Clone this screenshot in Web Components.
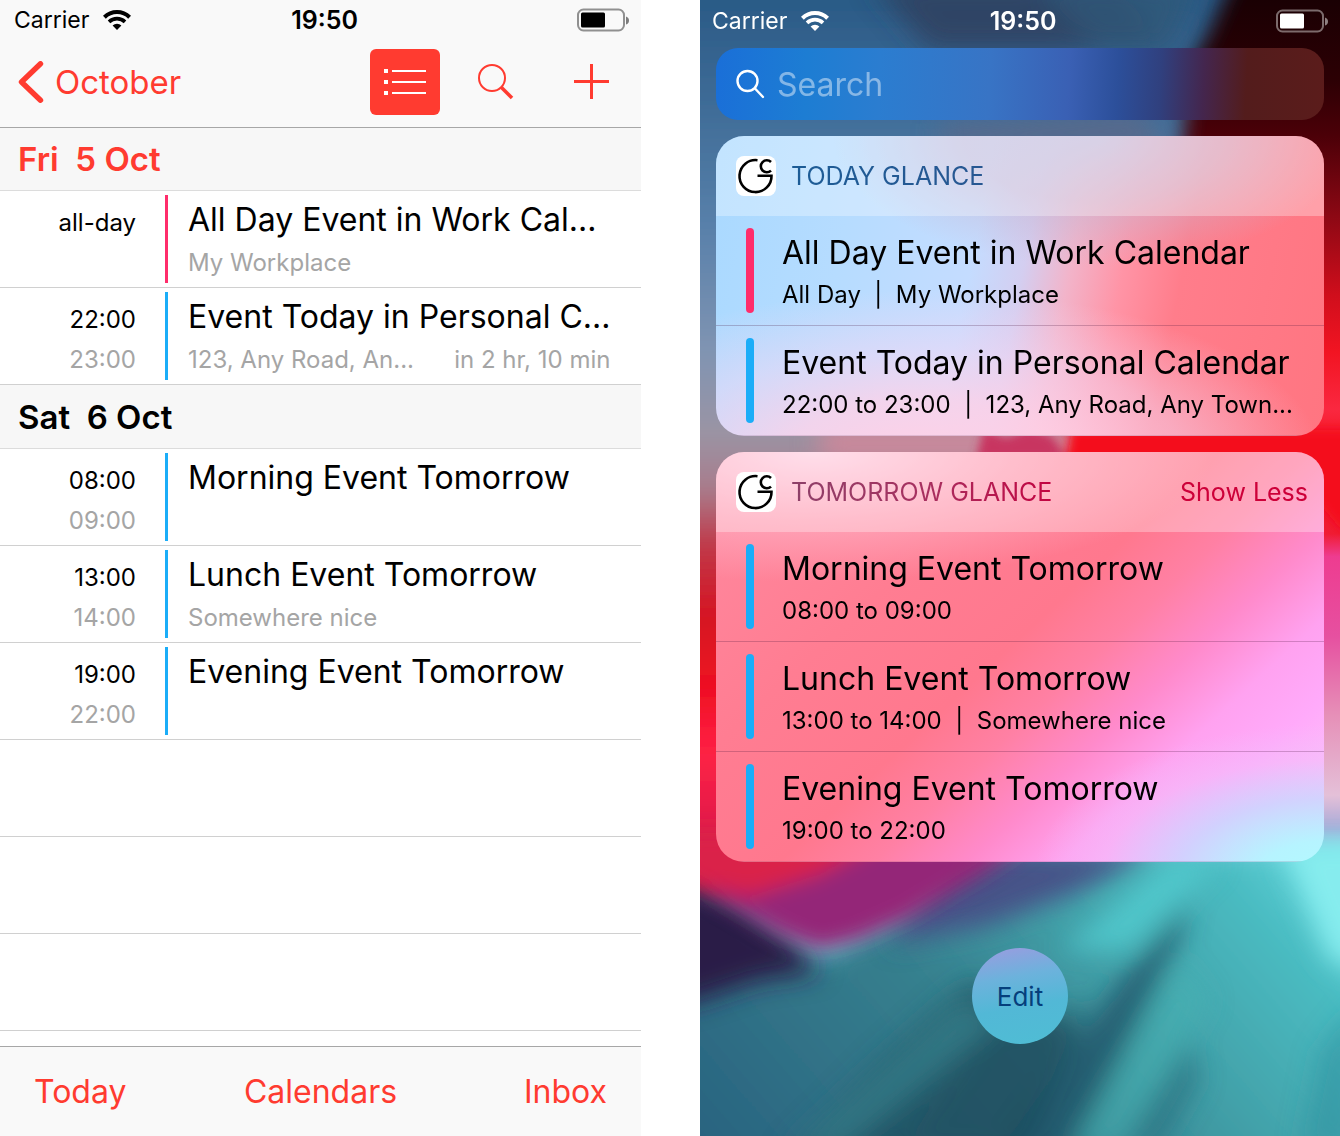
<!DOCTYPE html>
<html lang="en">
<head>
<meta charset="utf-8">
<meta name="viewport" content="width=device-width, initial-scale=1">
<title>Calendar and Glance widgets</title>
<style>
  body {
    margin: 0;
    background: #fff;
    font-family: Inter, "Liberation Sans", sans-serif;
    color: #000;
  }
</style>
</head>
<body>
<phone-pair>
  <calendar-screen slot="left">
    <status-bar slot="status"></status-bar>
    <day-header today>Fri&nbsp; 5 Oct</day-header>
    <agenda-row color="#ff2d6b">
      <span slot="start">all-day</span>
      <span slot="title">All Day Event in Work Cal...</span>
      <span slot="place">My Workplace</span>
    </agenda-row>
    <agenda-row>
      <span slot="start">22:00</span>
      <span slot="end">23:00</span>
      <span slot="title">Event Today in Personal C...</span>
      <span slot="place">123, Any Road, An...</span>
      <span slot="note">in 2 hr, 10 min</span>
    </agenda-row>
    <day-header>Sat&nbsp; 6 Oct</day-header>
    <agenda-row>
      <span slot="start">08:00</span>
      <span slot="end">09:00</span>
      <span slot="title">Morning Event Tomorrow</span>
    </agenda-row>
    <agenda-row>
      <span slot="start">13:00</span>
      <span slot="end">14:00</span>
      <span slot="title">Lunch Event Tomorrow</span>
      <span slot="place">Somewhere nice</span>
    </agenda-row>
    <agenda-row>
      <span slot="start">19:00</span>
      <span slot="end">22:00</span>
      <span slot="title">Evening Event Tomorrow</span>
    </agenda-row>
    <agenda-row empty></agenda-row>
    <agenda-row empty></agenda-row>
    <agenda-row empty></agenda-row>
  </calendar-screen>

  <widgets-screen slot="right">
    <status-bar slot="status" light></status-bar>
    <glance-card theme="today">
      <span slot="heading">TODAY GLANCE</span>
      <glance-row color="#ff2d6b">
        <span slot="title">All Day Event in Work Calendar</span>
        <span slot="detail">All Day&nbsp; |&nbsp; My Workplace</span>
      </glance-row>
      <glance-row>
        <span slot="title">Event Today in Personal Calendar</span>
        <span slot="detail">22:00 to 23:00&nbsp; |&nbsp; 123, Any Road, Any Town...</span>
      </glance-row>
    </glance-card>
    <glance-card theme="tomorrow" expandable>
      <span slot="heading">TOMORROW GLANCE</span>
      <glance-row>
        <span slot="title">Morning Event Tomorrow</span>
        <span slot="detail">08:00 to 09:00</span>
      </glance-row>
      <glance-row>
        <span slot="title">Lunch Event Tomorrow</span>
        <span slot="detail">13:00 to 14:00&nbsp; |&nbsp; Somewhere nice</span>
      </glance-row>
      <glance-row>
        <span slot="title">Evening Event Tomorrow</span>
        <span slot="detail">19:00 to 22:00</span>
      </glance-row>
    </glance-card>
  </widgets-screen>
</phone-pair>

<script>
const reset = `
  :host, * { box-sizing: border-box; }
  svg { display: block; flex: none; }
  button { font: inherit; color: inherit; background: none; border: 0; padding: 0; margin: 0; cursor: pointer; }
  a { color: inherit; text-decoration: none; }
`;

function define(name, render) {
  customElements.define(name, class extends HTMLElement {
    constructor() {
      super();
      this.attachShadow({ mode: 'open' });
    }
    connectedCallback() {
      this.shadowRoot.innerHTML = render(this);
    }
  });
}

define('phone-pair', () => `
  <style>${reset}
    :host { display: grid; grid-template-columns: 641fr 640fr; gap: 59px; min-height: 100vh; }
    ::slotted(*) { min-width: 0; }
  </style>
  <slot name="left"></slot>
  <slot name="right"></slot>`);

define('status-bar', () => `
  <style>${reset}
    :host { display: grid; grid-template-columns: 1fr auto 1fr; align-items: center; height: 40px;
            padding: 0 12px 0 14px; font-size: 23px; line-height: 40px; }
    :host([light]) { color: #fff; height: 42px; padding: 0 12px; line-height: 42px; }
    .carrier { display: flex; align-items: center; gap: 14px; }
    .time { font-size: 25px; font-weight: 600; padding-left: 6px; }
    .battery { justify-self: end; }
  </style>
  <span class="carrier">Carrier
    <svg width="28" height="20" viewBox="0 0 28 20" fill="none" stroke="currentColor" aria-hidden="true">
      <path d="M1.4 7.2A18 18 0 0 1 26.600 7.200" stroke-width="4"/>
      <path d="M6 11.900A11.500 11.500 0 0 1 22 11.900" stroke-width="3.600"/>
      <path d="M14 20L9.600 15.600A6.400 6.400 0 0 1 18.400 15.600Z" fill="currentColor" stroke="none"/>
    </svg>
  </span>
  <span class="time">19:50</span>
  <svg class="battery" width="54" height="24" viewBox="0 0 54 24" aria-hidden="true">
    <rect x="3" y="1.500" width="46" height="21" rx="5.500" fill="none" stroke="currentColor" stroke-opacity=".42" stroke-width="2"/>
    <rect x="6" y="4.500" width="24" height="15" rx="1.500" fill="currentColor"/>
    <path d="M51 8.500q3 1 3 4t-3 4z" fill="currentColor" fill-opacity=".5"/>
  </svg>`);

define('calendar-screen', () => `
  <style>${reset}
    :host { display: flex; flex-direction: column; background: #fff; --accent: #ff3b30; }
    header { background: #f9f9f9; border-bottom: 1px solid #a7a7a7; }
    nav { display: flex; align-items: center; height: 87px; padding: 0 32px 4px 18px; color: var(--accent); font-size: 33px; }
    .back { display: flex; align-items: center; gap: 11px; flex: 1; }
    .list { display: grid; place-items: center; width: 70px; height: 66px; border-radius: 6px; background: var(--accent); color: #fff; }
    .search { margin: 0 60px 0 38px; }
    main { flex: 1; }
    footer { display: grid; grid-template-columns: 1fr auto 1fr; align-items: center; height: 90px; padding: 0 34px;
             background: #f9f9f9; border-top: 1px solid #a7a7a7; color: var(--accent); font-size: 32px; }
    footer :first-child { justify-self: start; }
    footer :last-child { justify-self: end; }
  </style>
  <header>
    <slot name="status"></slot>
    <nav>
      <a class="back" href="#october">
        <svg width="26" height="42" viewBox="0 0 26 42" fill="none" stroke="currentColor" stroke-width="5.400" stroke-linecap="round" stroke-linejoin="round" aria-hidden="true">
          <path d="M22.500 2.800L3.500 21L22.500 39.200"/>
        </svg>
        October
      </a>
      <button class="list" aria-label="List view">
        <svg width="42" height="26" viewBox="0 0 42 26" fill="currentColor" aria-hidden="true">
          <path d="M0 0h4v4H0zM8 1h34v2H8zM0 11h4v4H0zM8 12h34v2H8zM0 22h4v4H0zM8 23h34v2H8z"/>
        </svg>
      </button>
      <button class="search" aria-label="Search">
        <svg width="36" height="36" viewBox="0 0 36 36" fill="none" stroke="currentColor" aria-hidden="true">
          <circle cx="14" cy="14" r="13" stroke-width="2"/>
          <path d="M23.500 23.500L34 34" stroke-width="3.600"/>
        </svg>
      </button>
      <button aria-label="Add event">
        <svg width="35" height="35" viewBox="0 0 35 35" fill="currentColor" aria-hidden="true">
          <path d="M16 0h3v16h16v3H19v16h-3V19H0v-3h16z"/>
        </svg>
      </button>
    </nav>
  </header>
  <main><slot></slot></main>
  <footer>
    <button>Today</button>
    <button>Calendars</button>
    <button>Inbox</button>
  </footer>`);

define('day-header', () => `
  <style>${reset}
    :host { display: block; height: 64px; padding-left: 18px; background: #f7f7f7; border-bottom: 1px solid #dcdcdc;
            font-size: 33px; line-height: 64px; font-weight: 600; }
    :host([today]) { height: 63px; line-height: 62px; color: #ff3b30; }
  </style>
  <slot></slot>`);

define('agenda-row', el => `
  <style>${reset}
    :host { display: grid; grid-template-columns: 165px 3px minmax(0, 1fr); height: 97px;
            border-bottom: 1px solid #d0d0d0; font-size: 24px; line-height: 40px; white-space: nowrap; }
    .times, .body { display: grid; grid-template-rows: 40px 40px; }
    .times { padding: 12px 29px 0 0; text-align: right; }
    .body { padding: 9px 31px 0 20px; min-width: 0; row-gap: 3px; }
    .bar { margin: 4px 0; background: ${el.getAttribute('color') || '#1badf8'}; }
    .title { font-size: 32px; }
    .end, .sub { color: #a5a5a5; }
    .sub { display: flex; justify-content: space-between; }
  </style>
  ${el.hasAttribute('empty') ? '' : `
  <div class="times">
    <span><slot name="start"></slot></span>
    <span class="end"><slot name="end"></slot></span>
  </div>
  <div class="bar"></div>
  <div class="body">
    <div class="title"><slot name="title"></slot></div>
    <div class="sub"><slot name="place"></slot><slot name="note"></slot></div>
  </div>`}`);

define('widgets-screen', () => `
  <style>${reset}
    :host { display: grid; position: relative; overflow: hidden; }
    wall-paper { position: absolute; inset: 0; }
    .content { position: relative; display: flex; flex-direction: column; }
    .search { display: flex; align-items: center; gap: 12px; height: 72px; margin: 6px 16px 16px; padding: 0 20px;
              border-radius: 22px; color: #fff;
              background: linear-gradient(93deg, #1a6fd8 0, #1d7dd3 15%, #2b7dd0 27%, #3874c5 45%, #3a60b4 58%, #2c4f9a 66%, #30407e 73%, #44264e 80%, #531c1c 87%, #5b1c1b 100%); }
    input { flex: 1; min-width: 0; padding: 0; border: 0; outline: 0; background: none; color: #fff; font: inherit; font-size: 32px; height: 72px; }
    input::placeholder { color: rgba(255, 255, 255, .45); opacity: 1; }
    .cards { display: grid; gap: 16px; margin: 0 16px; }
    .edit { align-self: center; width: 96px; height: 96px; margin: 86px 0; border-radius: 50%; font-size: 26px; color: #053f7c;
            background: linear-gradient(170deg, #9a9ce0 2%, #6cb2dc 32%, #52b8d6 60%, #4fbdd4 100%); }
  </style>
  <wall-paper></wall-paper>
  <div class="content">
    <slot name="status"></slot>
    <label class="search">
      <svg width="29" height="30" viewBox="0 0 29 30" fill="none" stroke="currentColor" stroke-width="2.400" stroke-linecap="round" aria-hidden="true">
        <circle cx="11.500" cy="12" r="10"/><path d="M19 19.500L27 28"/>
      </svg>
      <input type="search" placeholder="Search" aria-label="Search">
    </label>
    <div class="cards"><slot></slot></div>
    <button class="edit">Edit</button>
  </div>`);

define('glance-card', el => `
  <style>${reset}
    :host { display: block; border-radius: 28px; overflow: hidden; }
    :host([theme="today"]) {
      --heading: linear-gradient(90deg, #1c5c96, #2c5590);
      background:
        radial-gradient(ellipse 400px 170px at 34% 108%, #ffd0e6 0, #ffd2e8d0 35%, #f4d8f480 65%, #ffd0e400 100%),
        radial-gradient(ellipse 260px 130px at 62% 0, #c0c0e0e0 0, #c8b4d0a0 50%, #e0a0b000 100%),
        linear-gradient(101deg, #a9d9ff 0, #b6dcff 22%, #c4dcff 42%, #d4cef0 50%, #f2b4ca 57%, #ff94a6 65%, #ff7d8b 74%, #ff7581 100%);
    }
    :host([theme="tomorrow"]) {
      --heading: linear-gradient(90deg, #8d4068, #a83060 50%, #c4003e);
      background:
        radial-gradient(ellipse 290px 150px at 100% 103%, #b2faff 0, #b6f4ff 22%, #c8d8ffd0 50%, #f0c0fa80 76%, #ffb0fa00 100%),
        radial-gradient(ellipse 400px 130px at 16% 0, #ffd0e2 0, #ffb4c8b0 50%, #ff9cb000 100%),
        linear-gradient(137deg, #ff8aa0 0, #ff7d92 30%, #ff788e 48%, #ff80a4 57%, #ff8acb 66%, #ffa2f0 75%, #ffaafa 83%, #fcccfb 100%);
    }
    header { display: flex; align-items: center; gap: 15px; height: 80px; padding: 0 16px 0 20px; font-size: 25px; background: rgba(255, 255, 255, .3); }
    .heading { flex: 1; color: transparent; background: var(--heading) 0 0 / 270px 100%; -webkit-background-clip: text; background-clip: text; }
    button { color: #cd0039; }
  </style>
  <header>
    <svg width="40" height="40" viewBox="0 0 40 40" fill="none" stroke="#000" stroke-width="2.600" aria-hidden="true">
      <rect width="40" height="40" rx="8" fill="#fff" stroke="none"/>
      <path d="M21.500 4.200A16 16 0 1 0 35.500 19.700H21.500"/>
      <path d="M35 6A6 6 0 1 0 35 14.600"/>
    </svg>
    <span class="heading"><slot name="heading"></slot></span>
    ${el.hasAttribute('expandable') ? '<button>Show Less</button>' : ''}
  </header>
  <slot></slot>`);

define('glance-row', el => `
  <style>${reset}
    :host { display: flex; gap: 28px; height: 110px; padding: 12px 16px 12px 30px; border-bottom: 1px solid rgba(70, 20, 60, .25); }
    :host(:last-child) { border-bottom-color: rgba(90, 50, 90, .15); }
    .bar { width: 8px; border-radius: 4px; background: ${el.getAttribute('color') || '#1badf8'}; }
    .text { min-width: 0; white-space: nowrap; padding-top: 4px; }
    .title { font-size: 32px; line-height: 42px; }
    .detail { font-size: 24px; line-height: 42px; }
  </style>
  <div class="bar"></div>
  <div class="text">
    <div class="title"><slot name="title"></slot></div>
    <div class="detail"><slot name="detail"></slot></div>
  </div>`);

/* Abstract folded-fabric wallpaper: blue top left, red and magenta folds, teal rays below. */
define('wall-paper', () => `
  <style>${reset}
    :host { display: block; background: #2f6a80; }
    svg { width: 100%; height: 100%; }
  </style>
  <svg viewBox="0 0 640 1136" preserveAspectRatio="none" aria-hidden="true">
    <defs>
      <linearGradient id="left" gradientUnits="userSpaceOnUse" x1="0" y1="0" x2="0" y2="1136">
        <stop offset="0" stop-color="#2a5a86"/><stop offset=".1" stop-color="#406d98"/>
        <stop offset=".2" stop-color="#5880aa"/><stop offset=".31" stop-color="#8094b2"/>
        <stop offset=".38" stop-color="#9a94a4"/><stop offset=".43" stop-color="#a87c8c"/>
        <stop offset=".48" stop-color="#c03848"/><stop offset=".54" stop-color="#d41624"/>
        <stop offset=".61" stop-color="#f01024"/><stop offset=".66" stop-color="#ff2044"/>
        <stop offset=".74" stop-color="#dc1e4a"/><stop offset="1" stop-color="#dc1e4a"/>
      </linearGradient>
      <linearGradient id="right" x2="0" y2="1">
        <stop offset="0" stop-color="#1a0003"/><stop offset=".07" stop-color="#2c0004"/>
        <stop offset=".12" stop-color="#4c0008"/><stop offset=".19" stop-color="#8c0814"/>
        <stop offset=".26" stop-color="#d00e1c"/><stop offset=".31" stop-color="#f21422"/>
        <stop offset=".36" stop-color="#fa2840"/><stop offset=".4" stop-color="#f4101c"/>
        <stop offset=".47" stop-color="#f01c34"/><stop offset=".49" stop-color="#ee3c90"/>
        <stop offset=".56" stop-color="#e650a0"/><stop offset=".63" stop-color="#e690b8"/>
        <stop offset=".7" stop-color="#e4c0d8"/><stop offset=".73" stop-color="#a8a8d8"/>
        <stop offset=".77" stop-color="#8ce4ea"/><stop offset="1" stop-color="#40b8c0"/>
      </linearGradient>
      <linearGradient id="teal" x1="0" y1=".6" x2="1" y2=".2">
        <stop offset="0" stop-color="#2a6480"/><stop offset=".4" stop-color="#36808e"/>
        <stop offset=".62" stop-color="#42a0a8"/><stop offset=".85" stop-color="#4abcc2"/>
        <stop offset="1" stop-color="#6adce2"/>
      </linearGradient>
      <filter id="b6" x="-50%" y="-50%" width="200%" height="200%"><feGaussianBlur stdDeviation="5"/></filter>
      <filter id="b10" x="-50%" y="-50%" width="200%" height="200%"><feGaussianBlur stdDeviation="10"/></filter>
      <filter id="b14" x="-50%" y="-50%" width="200%" height="200%"><feGaussianBlur stdDeviation="13"/></filter>
    </defs>
    <rect width="640" height="1136" fill="url(#right)"/>
    <path d="M-60 -60H550L505 40L492 60L482 150L360 450L200 900H-60Z" fill="url(#left)" filter="url(#b10)"/>
    <g filter="url(#b14)">
      <path d="M170 -20H420L460 50H230Z" fill="#30405c" opacity=".8"/>
      <path d="M330 -20H500L470 50H400Z" fill="#2f5878" opacity=".8"/>
      <path d="M240 124L440 110L470 150H240Z" fill="#5c6888" opacity=".8"/>
      <path d="M120 428H390V458H120Z" fill="#d8869a" opacity=".9"/>
    </g>
    <path d="M284 428L276 460H368L352 436L330 428L306 438Z" fill="#c83460" filter="url(#b6)"/>
    <path d="M372 430H700V550L640 528L600 480H364Z" fill="#f4101c" filter="url(#b6)"/>

    <path d="M-60 980L-40 900L120 960L330 850H700V1200H-60Z" fill="url(#teal)" filter="url(#b14)"/>
    <g filter="url(#b14)">
      <path d="M-40 870L40 900L90 940L120 972L60 980L0 1000L-40 1010Z" fill="#2c1c46"/>
      <path d="M250 850H460L370 895L290 925L190 945Z" fill="#465288"/>
      <path d="M470 860L360 950L430 950L520 860Z" fill="#52ccd0" opacity=".8"/>
      <path d="M580 840H700V980L630 960Z" fill="#86ecee"/>
      <path d="M490 900L420 980L290 1160H370L440 1020L480 940Z" fill="#1f4a60" opacity=".7"/>
      <path d="M270 980L180 1060L80 1160H320L380 1030L340 1010Z" fill="#1a4858" opacity=".7"/>
      <path d="M390 1000L350 1080L300 1150H200L290 1030Z" fill="#205262" opacity=".5"/>
      <path d="M490 1040L420 1150H460L500 1080Z" fill="#2a6a7c" opacity=".6"/>
      <path d="M480 960L370 1150H420L510 1000Z" fill="#48b4b4" opacity=".5"/>
      <path d="M620 1050L600 1150H660V1000Z" fill="#2a8c9c" opacity=".5"/>
      <path d="M260 1000L90 1150H140L300 1020Z" fill="#3c8a98" opacity=".6"/>
    </g>
    <g filter="url(#b10)">
      <path d="M-20 840H336L280 876L210 918L160 940L120 950L80 935L20 900L-20 870Z" fill="#942878"/>
      <path d="M-20 830H200L120 874L50 896L-20 880Z" fill="#da2048"/>
    </g>
  </svg>`);
</script>
</body>
</html>
